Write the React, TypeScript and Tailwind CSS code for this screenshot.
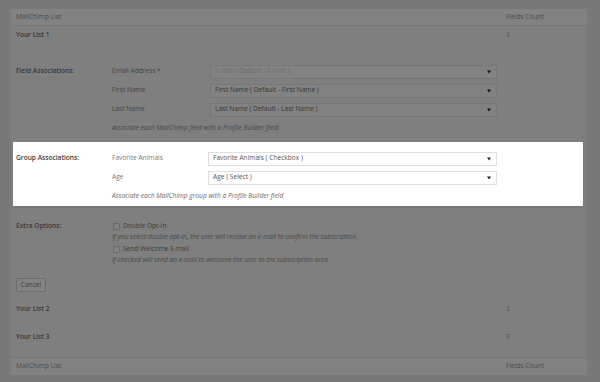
import React from "react";

const Arrow = ({ color }: { color: string }) => (
  <svg width="4" height="4" viewBox="0 0 4 4" className="shrink-0">
    <path d="M0 0.5 L4 0.5 L2 3.5 Z" fill={color} />
  </svg>
);

const DimSelect = ({ text, disabled }: { text: string; disabled?: boolean }) => (
  <div className="w-[287px] h-[14px] border border-[#777777] bg-[#828282] flex items-center justify-between pl-[4px] pr-[5px]">
    <span className={disabled ? "text-[#6e6e6e]" : "text-[#353535]"}>{text}</span>
    <Arrow color="#151515" />
  </div>
);

const LightSelect = ({ text }: { text: string }) => (
  <div className="w-[289px] h-[14px] border border-[#e0e0e0] bg-white flex items-center justify-between pl-[4px] pr-[5px]">
    <span className="text-[#555555]">{text}</span>
    <Arrow color="#222" />
  </div>
);

export default function App() {
  return (
    <div className="w-[600px] h-[382px] bg-[#787878] overflow-hidden pt-[9px] pl-[11px] pr-[13px] font-['Open_Sans',sans-serif] text-[6.6px] leading-none">
      <div className="bg-[#7f7f7f] flex flex-col">
        <div className="h-[17px] bg-[#828282] border-b border-[#767676] flex items-center text-[#4a4a4a]">
          <div className="pl-[5px] w-[495px]">MailChimp List</div>
          <div>Fields Count</div>
        </div>
        <div className="h-[18px] flex items-center">
          <div className="pl-[5px] w-[495px] font-semibold text-[#383838]">Your List 1</div>
          <div className="text-[#4a4a4a]">3</div>
        </div>
        <div className="h-[18px]" />
        <div className="flex">
          <div className="w-[101px] pl-[5px] h-[19px] flex items-center font-semibold text-[#383838]">Field Associations:</div>
          <div className="flex flex-col">
            <div className="h-[19px] flex items-center">
              <div className="w-[98px] text-[#444]">Email Address *</div>
              <DimSelect text="E-mail ( Default - E-mail )" disabled />
            </div>
            <div className="h-[19px] flex items-center">
              <div className="w-[98px] text-[#444]">First Name</div>
              <DimSelect text="First Name ( Default - First Name )" />
            </div>
            <div className="h-[19px] flex items-center">
              <div className="w-[98px] text-[#444]">Last Name</div>
              <DimSelect text="Last Name ( Default - Last Name )" />
            </div>
            <div className="h-[18px] flex items-center italic text-[#474747]">
              Associate each MailChimp field with a Profile Builder field
            </div>
          </div>
        </div>
        <div className="h-[5px]" />
        <div className="ml-[2px] mr-[4px] h-[64px] bg-white flex pt-[7px] shadow-[0_1px_2px_rgba(0,0,0,0.12)]">
          <div className="w-[99px] pl-[3px] h-[19px] flex items-center font-semibold text-[#3a3a3a]">Group Associations:</div>
          <div className="flex flex-col">
            <div className="h-[19px] flex items-center">
              <div className="w-[96px] text-[#7a7a7a]">Favorite Animals</div>
              <LightSelect text="Favorite Animals ( Checkbox )" />
            </div>
            <div className="h-[19px] flex items-center">
              <div className="w-[96px] text-[#7a7a7a]">Age</div>
              <LightSelect text="Age ( Select )" />
            </div>
            <div className="h-[19px] flex items-center italic text-[#6a6a6a]">
              Associate each MailChimp group with a Profile Builder field
            </div>
          </div>
        </div>
        <div className="flex pt-[14px]">
          <div className="w-[101px] pl-[5px] h-[12px] flex items-center font-semibold text-[#383838]">Extra Options:</div>
          <div className="flex flex-col">
            <div className="h-[12px] flex items-center gap-[3px] pl-[1px]">
              <div className="w-[7px] h-[7px] border border-[#6a6a6a] bg-[#838383] rounded-[1px]" />
              <span className="text-[#3a3a3a]">Double Opt-In</span>
            </div>
            <div className="h-[11px] flex items-center italic text-[#474747]">
              If you select double opt-in, the user will receive an e-mail to confirm the subscription
            </div>
            <div className="h-[12px] flex items-center gap-[3px] pl-[1px]">
              <div className="w-[7px] h-[7px] border border-[#6a6a6a] bg-[#838383] rounded-[1px]" />
              <span className="text-[#3a3a3a]">Send Welcome E-mail</span>
            </div>
            <div className="h-[11px] flex items-center italic text-[#474747]">
              If checked will send an e-mail to welcome the user to the subscription area
            </div>
          </div>
        </div>
        <div className="h-[12px]" />
        <div className="pl-[5px]">
          <div className="w-[30px] h-[14px] border border-[#6c6c6c] bg-[#838383] rounded-[2px] flex items-center justify-center text-[#404040]">
            Cancel
          </div>
        </div>
        <div className="h-[8px]" />
        <div className="h-[18px] flex items-center">
          <div className="pl-[5px] w-[495px] font-semibold text-[#383838]">Your List 2</div>
          <div className="text-[#4a4a4a]">3</div>
        </div>
        <div className="h-[10px]" />
        <div className="h-[18px] flex items-center">
          <div className="pl-[5px] w-[495px] font-semibold text-[#383838]">Your List 3</div>
          <div className="text-[#4a4a4a]">3</div>
        </div>
        <div className="h-[11px]" />
        <div className="h-[18px] bg-[#828282] border-t border-[#767676] flex items-center text-[#4a4a4a]">
          <div className="pl-[5px] w-[495px]">MailChimp List</div>
          <div>Fields Count</div>
        </div>
      </div>
    </div>
  );
}
